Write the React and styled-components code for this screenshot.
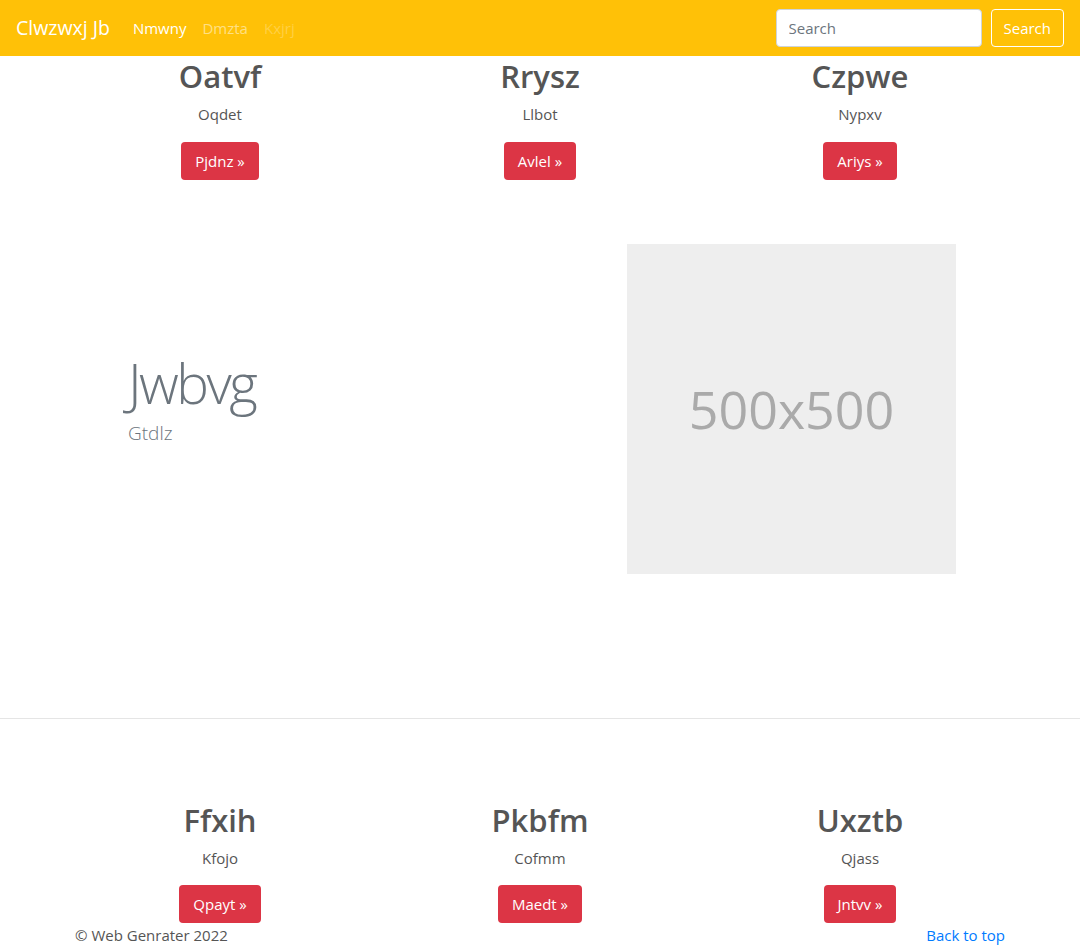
import React from 'react';
import styled, {createGlobalStyle} from "styled-components";

const GlobalStyle = createGlobalStyle`
  body {
    margin: 0;
    font-family: "Open Sans", "Noto Sans", sans-serif;
    font-size: 16px;
    line-height: 1.5;
    color: #555;
    background: #fff;
  }
  * { box-sizing: border-box; }
`;

const marketingTop = [
    {title: 'Oatvf', text: 'Oqdet', action: 'Pjdnz'},
    {title: 'Rrysz', text: 'Llbot', action: 'Avlel'},
    {title: 'Czpwe', text: 'Nypxv', action: 'Ariys'},
];

const marketingBottom = [
    {title: 'Ffxih', text: 'Kfojo', action: 'Qpayt'},
    {title: 'Pkbfm', text: 'Cofmm', action: 'Maedt'},
    {title: 'Uxztb', text: 'Qjass', action: 'Jntvv'},
];

function Marketing({items}) {
    return (
        <MarketingRow>
            {items.map(item => (
                <Column key={item.title}>
                    <Heading>{item.title}</Heading>
                    <Text>{item.text}</Text>
                    <RedButton href="#">{item.action} &raquo;</RedButton>
                </Column>
            ))}
        </MarketingRow>
    )
}

function App() {
    return (
        <>
            <GlobalStyle/>
            <Navbar>
                <Brand href="#">Clwzwxj Jb</Brand>
                <NavLinks>
                    <NavLink href="#" $state="active">Nmwny</NavLink>
                    <NavLink href="#">Dmzta</NavLink>
                    <NavLink href="#" $state="disabled">Kxjrj</NavLink>
                </NavLinks>
                <SearchForm>
                    <SearchInput type="text" placeholder="Search"/>
                    <OutlineButton type="button">Search</OutlineButton>
                </SearchForm>
            </Navbar>
            <main>
                <Container>
                    <Marketing items={marketingTop}/>
                    <Featurette>
                        <FeatureText>
                            <FeatureHeading>Jwbvg</FeatureHeading>
                            <Lead>Gtdlz</Lead>
                        </FeatureText>
                        <Placeholder>500x500</Placeholder>
                    </Featurette>
                </Container>
                <Divider/>
                <Container>
                    <BottomSpacer>
                        <Marketing items={marketingBottom}/>
                    </BottomSpacer>
                </Container>
                <Footer>
                    <span>&copy; Web Genrater 2022</span>
                    <FooterLink href="#">Back to top</FooterLink>
                </Footer>
            </main>
        </>
    )
}

const Navbar = styled.nav`
  display: flex;
  align-items: center;
  height: 56px;
  padding: 0 16px;
  background: #ffc107;
`;

const Brand = styled.a`
  font-size: 19.5px;
  color: #fff;
  text-decoration: none;
  margin-right: 15px;
`;

const NavLinks = styled.div`
  display: flex;
  flex: 1;
`;

const NavLink = styled.a`
  padding: 8px;
  font-size: 15px;
  text-decoration: none;
  color: ${p => p.$state === 'active' ? '#fff'
        : p.$state === 'disabled' ? 'rgba(255,255,255,.25)' : 'rgba(255,255,255,.5)'};
`;

const SearchForm = styled.form`
  display: flex;
  align-items: center;
  gap: 9px;
`;

const SearchInput = styled.input`
  width: 206px;
  height: 38px;
  padding: 6px 12px;
  font: inherit;
  font-size: 15px;
  color: #495057;
  border: 1px solid #ced4da;
  border-radius: 4px;
  background: #fff;
  &::placeholder { color: #6c757d; }
`;

const OutlineButton = styled.button`
  height: 38px;
  padding: 0 12px;
  font: inherit;
  font-size: 15px;
  color: #fff;
  background: transparent;
  border: 1px solid #fff;
  border-radius: 4px;
`;

const Container = styled.div`
  max-width: 960px;
  margin: 0 auto;
  padding: 0 15px;
`;

const MarketingRow = styled.div`
  display: grid;
  grid-template-columns: repeat(3, 1fr);
  margin: 0 -15px;
  text-align: center;
`;

const Column = styled.div`
  padding: 0 15px;
`;

const Heading = styled.h2`
  margin: 2px 0 8px;
  font-size: 31px;
  font-weight: 600;
  line-height: 1.2;
  color: #555;
`;

const Text = styled.p`
  margin: 0 0 16px;
  font-size: 15px;
`;

const RedButton = styled.a`
  display: inline-block;
  padding: 7px 14px;
  font-size: 15px;
  line-height: 24px;
  color: #fff;
  background: #dc3545;
  border-radius: 4px;
  text-decoration: none;
`;

const Featurette = styled.div`
  display: grid;
  grid-template-columns: 1fr 329px;
  align-items: center;
  padding: 0 49px;
  margin-top: 64px;
`;

const FeatureText = styled.div`
  padding: 0 0 15px 4px;
`;

const FeatureHeading = styled.h2`
  margin: 0 0 9px;
  font-size: 55px;
  font-weight: 300;
  line-height: 1;
  letter-spacing: -2.5px;
  color: #6c757d;
`;

const Lead = styled.p`
  margin: 0;
  font-size: 19px;
  font-weight: 300;
  color: #6c757d;
`;

const Placeholder = styled.div`
  display: flex;
  align-items: center;
  justify-content: center;
  height: 330px;
  background: #eee;
  color: #aaa;
  font-size: 52px;
`;

const Divider = styled.hr`
  margin: 144px 0 0;
  border: 0;
  border-top: 1px solid rgba(0,0,0,.1);
`;

const BottomSpacer = styled.div`
  padding-top: 81px;
`;

const Footer = styled.footer`
  display: flex;
  justify-content: space-between;
  max-width: 960px;
  margin: 0 auto;
  padding: 0 15px;
  font-size: 15px;
  color: #555;
  line-height: 24px;
`;

const FooterLink = styled.a`
  color: #007bff;
  text-decoration: none;
`;

export default App;
